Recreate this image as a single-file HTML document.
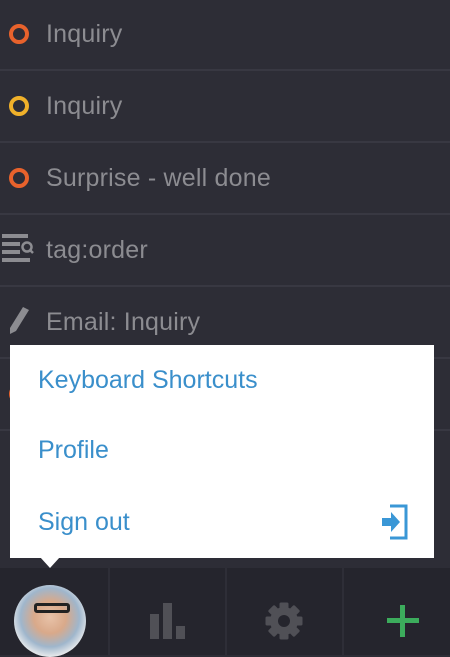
<!DOCTYPE html><html><head><style>
body{margin:0;width:450px;height:655px;background:#2d2d36;font-family:"Liberation Sans",sans-serif;overflow:hidden;position:relative}
.row{position:absolute;left:0;width:450px;height:71px;border-bottom:2px solid #383842;box-sizing:border-box}
.row span{position:absolute;left:46px;top:20px;font-size:25px;color:#8c8c91;letter-spacing:0.2px}
.ring{position:absolute;left:9px;width:12px;height:12px;border:4px solid;border-radius:50%}
.menu{position:absolute;left:10px;top:345px;width:424px;height:213px;background:#fff}
.menu div{position:absolute;left:28px;font-size:25px;color:#3a8fcb}
.bar{position:absolute;left:0;top:568px;width:450px;height:87px;background:#25252d}
.sep{position:absolute;top:568px;width:2px;height:87px;background:#2e2e37}
</style></head><body>
<div class="row" style="top:0"><div class="ring" style="top:24px;border-color:#e8622c"></div><span>Inquiry</span></div>
<div class="row" style="top:72px"><div class="ring" style="top:24px;border-color:#f0b12a"></div><span>Inquiry</span></div>
<div class="row" style="top:144px"><div class="ring" style="top:24px;border-color:#e8622c"></div><span>Surprise - well done</span></div>
<div class="row" style="top:216px"><svg style="position:absolute;left:2px;top:18px" width="32" height="30"><g fill="#8c8c91"><rect x="0" y="0" width="26" height="4"/><rect x="0" y="8" width="18" height="4"/><rect x="0" y="16" width="18" height="4"/><rect x="0" y="24" width="28" height="4"/></g><circle cx="25" cy="13" r="4.5" fill="none" stroke="#8c8c91" stroke-width="2.5"/><line x1="28" y1="16" x2="31" y2="19" stroke="#8c8c91" stroke-width="2.5"/></svg><span>tag:order</span></div>
<div class="row" style="top:288px"><svg style="position:absolute;left:8px;top:17px" width="22" height="30"><path d="M15 2 L21 5 L8 26 L2 29 L2 23 Z" fill="#8c8c91"/></svg><span>Email: Inquiry</span></div>
<div class="row" style="top:360px"><div class="ring" style="top:24px;border-color:#e8622c"></div></div>
<div class="menu">
<div style="top:21px">Keyboard Shortcuts</div>
<div style="top:91px">Profile</div>
<div style="top:163px">Sign out</div>
<svg style="position:absolute;left:372px;top:159px" width="26" height="36"><path d="M8 2H24V34H8" fill="none" stroke="#3a97d6" stroke-width="3"/><path d="M0 14H9V8L18 18L9 28V22H0Z" fill="#3a97d6"/></svg>
</div>
<svg style="position:absolute;left:40px;top:557px" width="20" height="12"><path d="M0 0H20L10 11Z" fill="#fff"/></svg>
<div class="bar"></div>
<div class="sep" style="left:108px"></div><div class="sep" style="left:225px"></div><div class="sep" style="left:342px"></div>
<div style="position:absolute;left:14px;top:585px;width:72px;height:72px;border-radius:50%;background:radial-gradient(circle at 50% 45%,#e8c2a8 0,#d9a98a 30%,#9fb6cc 55%,#eeeeee 75%)"></div>
<div style="position:absolute;left:34px;top:603px;width:36px;height:10px;border:3px solid #222;border-radius:3px;box-sizing:border-box"></div>
<svg style="position:absolute;left:149px;top:603px" width="38" height="36" fill="#505056"><rect x="1" y="11" width="9" height="25"/><rect x="14" y="0" width="9" height="36"/><rect x="27" y="23" width="9" height="13"/></svg>
<svg style="position:absolute;left:265px;top:602px" width="38" height="38" viewBox="0 0 38 38"><g fill="#505056" transform="translate(19 19)"><circle r="14"/><g><rect x="-4.5" y="-18.5" width="9" height="37" rx="1.5"/><rect x="-4.5" y="-18.5" width="9" height="37" rx="1.5" transform="rotate(45)"/><rect x="-4.5" y="-18.5" width="9" height="37" rx="1.5" transform="rotate(90)"/><rect x="-4.5" y="-18.5" width="9" height="37" rx="1.5" transform="rotate(135)"/></g></g><circle cx="19" cy="19" r="6" fill="#25252d"/></svg>
<svg style="position:absolute;left:387px;top:605px" width="32" height="32"><rect x="13" y="0" width="5" height="32" fill="#3cac5c"/><rect x="0" y="13" width="32" height="5" fill="#3cac5c"/></svg>
</body></html>
